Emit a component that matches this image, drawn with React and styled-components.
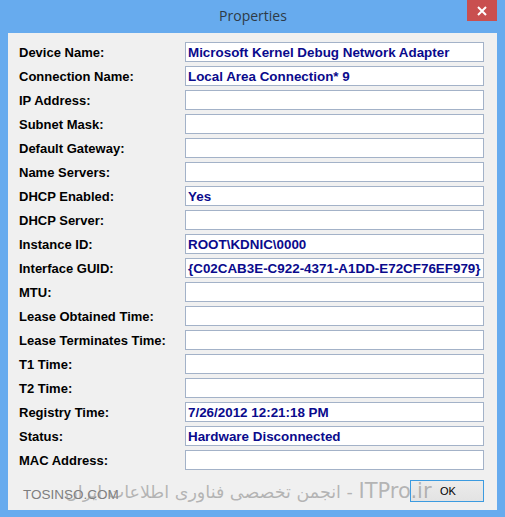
import styled, { createGlobalStyle } from 'styled-components';

const GlobalStyle = createGlobalStyle`
  html, body {
    margin: 0;
    padding: 0;
    background: #67abee;
  }
`;

const rows = [
  ['Device Name:', 'Microsoft Kernel Debug Network Adapter'],
  ['Connection Name:', 'Local Area Connection* 9'],
  ['IP Address:', ''],
  ['Subnet Mask:', ''],
  ['Default Gateway:', ''],
  ['Name Servers:', ''],
  ['DHCP Enabled:', 'Yes'],
  ['DHCP Server:', ''],
  ['Instance ID:', 'ROOT\\KDNIC\\0000'],
  ['Interface GUID:', '{C02CAB3E-C922-4371-A1DD-E72CF76EF979}'],
  ['MTU:', ''],
  ['Lease Obtained Time:', ''],
  ['Lease Terminates Time:', ''],
  ['T1 Time:', ''],
  ['T2 Time:', ''],
  ['Registry Time:', '7/26/2012 12:21:18 PM'],
  ['Status:', 'Hardware Disconnected'],
  ['MAC Address:', ''],
];

const App = () => {
  return (
    <>
      <GlobalStyle />
      <Window>
        <TitleBar>
          <span />
          <Title>Properties</Title>
          <CloseButton>
            <svg width="10" height="10" viewBox="0 0 10 10">
              <path d="M1 1 L9 9 M9 1 L1 9" stroke="#fff" strokeWidth="2" />
            </svg>
          </CloseButton>
        </TitleBar>
        <Client>
          <Form>
            {rows.map(([label, value]) => (
              <Row key={label}>
                <Label>{label}</Label>
                <Field>{value}</Field>
              </Row>
            ))}
          </Form>
          <Footer>
            <Watermark>
              <Site>TOSINSO.COM</Site>
              <Persian>
                انجمن تخصصی فناوری اطلاعات ایران - <Latin>ITPro.ir</Latin>
              </Persian>
            </Watermark>
            <OkButton>OK</OkButton>
          </Footer>
        </Client>
      </Window>
    </>
  );
};

export default App;

const Window = styled.div`
  width: 505px;
  height: 517px;
  box-sizing: border-box;
  background: #67abee;
  display: flex;
  flex-direction: column;
  padding: 0 8px 7px;
`;

const TitleBar = styled.div`
  height: 33px;
  display: grid;
  grid-template-columns: 1fr auto 1fr;
  align-items: start;
`;

const Title = styled.div`
  font-family: 'Open Sans', sans-serif;
  font-size: 14px;
  color: #2e3a46;
  line-height: 32px;
  padding-left: 1px;
`;

const CloseButton = styled.div`
  justify-self: end;
  width: 30px;
  height: 21px;
  background: #c94f4f;
  display: flex;
  align-items: center;
  justify-content: center;
`;

const Client = styled.div`
  flex: 1;
  background: #f0f0f0;
  padding: 9px 13px 8px 11px;
  display: flex;
  flex-direction: column;
`;

const Form = styled.div`
  display: flex;
  flex-direction: column;
  gap: 4px;
`;

const Row = styled.div`
  display: grid;
  grid-template-columns: 166px 1fr;
  align-items: center;
  height: 20px;
`;

const Label = styled.div`
  font-family: 'Liberation Sans', Arial, sans-serif;
  font-weight: bold;
  font-size: 13px;
  color: #000;
`;

const Field = styled.div`
  height: 20px;
  box-sizing: border-box;
  border: 1px solid #a3b2c8;
  background: #fff;
  padding: 0 0 0 2px;
  font-family: 'Liberation Sans', Arial, sans-serif;
  font-weight: bold;
  font-size: 13.4px;
  line-height: 19px;
  color: #0a0a8c;
  white-space: nowrap;
  overflow: hidden;
`;

const Footer = styled.div`
  margin-top: 10px;
  height: 22px;
  display: flex;
  justify-content: flex-end;
  position: relative;
`;

const Watermark = styled.div`
  position: absolute;
  left: 1px;
  top: 0;
  pointer-events: none;
`;

const Site = styled.span`
  position: absolute;
  left: 3px;
  top: 7px;
  font-family: 'Liberation Sans', Arial, sans-serif;
  font-size: 13.5px;
  color: #7e7e7e;
  white-space: nowrap;
`;

const Persian = styled.span`
  position: absolute;
  left: 45px;
  top: 1px;
  direction: ltr;
  font-family: 'DejaVu Sans', sans-serif;
  font-size: 17.5px;
  line-height: 20px;
  color: rgba(140, 140, 140, 0.6);
  white-space: nowrap;
`;

const Latin = styled.span`
  font-size: 21px;
`;

const OkButton = styled.button`
  width: 74px;
  height: 22px;
  box-sizing: border-box;
  border: 1px solid #3c9be0;
  background: linear-gradient(#ececec, #e3e3e3);
  font-family: 'Liberation Sans', Arial, sans-serif;
  font-size: 11px;
  color: #000;
  padding: 0;
  text-align: left;
  padding-left: 29px;
`;
